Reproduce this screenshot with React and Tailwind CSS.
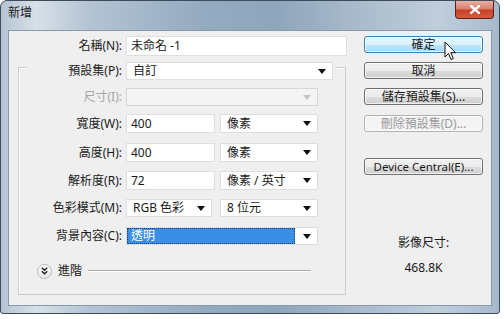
import React from 'react';

const font = { fontFamily: '"Noto Sans", "Noto Sans CJK TC", sans-serif' };

function Arrow({ disabled }) {
  return (
    <svg width="8" height="5" viewBox="0 0 8 5" className="shrink-0">
      <path d="M0 0 H8 L4 5 Z" fill={disabled ? '#c4c4c4' : '#111'} />
    </svg>
  );
}

function Field({ w, children }) {
  return (
    <div className={`flex items-center h-full border bg-white border-[#dedede] ${w}`}>
      <span className="flex-1 pl-[4px] leading-none text-[#1a1a1a]">{children}</span>
    </div>
  );
}

function Select({ w, children, disabled, selected }) {
  return (
    <div
      className={`flex items-center h-full border pr-[6px] ${disabled ? 'bg-[#f4f4f4] border-[#d6d6d6]' : 'bg-white border-[#dedede]'} ${w}`}
    >
      {selected ? (
        <span className="flex-1 h-[16px] mr-[8px] bg-[#3a8ee6] border border-dotted border-[#1c3f6a] text-white leading-[14px] pl-[3px]">
          {children}
        </span>
      ) : (
        <span className="flex-1 pl-[6px] leading-none text-[#1a1a1a]">{children}</span>
      )}
      <Arrow disabled={disabled} />
    </div>
  );
}

// label column inside the group box: inner left edge at x=19, fields start at x=126
function Label({ children, disabled }) {
  return (
    <div className={`w-[107px] shrink-0 pr-[4px] text-right leading-none ${disabled ? 'text-[#a8a8a8]' : 'text-[#1a1a1a]'}`}>
      {children}
    </div>
  );
}

function Btn({ children, variant }) {
  const styles = {
    default:
      'border-[#3c7fb1] bg-[linear-gradient(180deg,#eaf6fd_0%,#d9f0fc_50%,#bee6fd_51%,#a7d9f5_100%)] text-[#1a1a1a]',
    normal:
      'border-[#707070] bg-[linear-gradient(180deg,#f2f2f2_0%,#ebebeb_50%,#dddddd_51%,#cfcfcf_100%)] text-[#1a1a1a]',
    disabled: 'border-[#adb2b5] bg-[#f4f4f4] text-[#9a9a9a]',
  };
  return (
    <div
      className={`w-[119px] h-[17px] rounded-[3px] border flex items-center justify-center leading-none shadow-[inset_0_0_0_1px_rgba(255,255,255,0.7)] ${styles[variant]}`}
    >
      {children}
    </div>
  );
}

export default function App() {
  return (
    <div className="w-[504px] h-[319px] bg-white relative overflow-hidden text-[12px]" style={font}>
      <div className="w-[500px] h-[314px] rounded-t-[7px] rounded-b-[3px] border border-[#3e4b59] bg-[linear-gradient(90deg,#b4c3d2_0%,#d7e0e8_7%,#b3c3d3_18%,#95abc1_40%,#8ea5bc_55%,#aabbcc_72%,#c0cedb_88%,#a6b9cc_100%)] flex flex-col px-[7px] pb-[7px]">
        {/* title bar */}
        <div className="h-[29px] flex items-start justify-between">
          <span className="pt-[6px] text-[12px] leading-none text-[#1a1a1a]">新增</span>
          <div className="-mr-[2px] w-[39px] h-[18px] rounded-b-[4px] border border-t-0 border-[#5e2016] bg-[linear-gradient(180deg,#eab0a3_0%,#d9806d_45%,#c64128_55%,#d65b3f_100%)] flex items-center justify-center">
            <svg width="10" height="9" viewBox="0 0 10 9">
              <path d="M1 1 L9 8 M9 1 L1 8" stroke="#fff" strokeWidth="2.4" strokeLinecap="square" />
            </svg>
          </div>
        </div>

        {/* client */}
        <div className="flex-1 bg-[#efefef] border border-[#8799ad] flex">
          {/* left */}
          <div className="w-[347px] pt-[5px] flex flex-col">
            <div className="flex items-center h-[20px]">
              <div className="w-[117px] pr-[4px] text-right leading-none text-[#1a1a1a]">名稱(N):</div>
              <Field w="w-[221px]">未命名 -1</Field>
            </div>

            <div className="mt-[11px] ml-[9px] w-[328px] h-[228px] border border-[#cbcbcb] shadow-[inset_1px_1px_0_#fff] flex flex-col">
              {/* preset row sits on the border */}
              <div className="-mt-[6px] flex h-[18px]">
                <div className="w-[8px]" />
                <div className="w-[99px] bg-[#efefef] flex items-center justify-end pr-[4px] leading-none text-[#1a1a1a]">預設集(P):</div>
                <Select w="w-[207px]">自訂</Select>
                <div className="w-[2px] bg-[#efefef]" />
              </div>

              <div className="mt-[8px] flex items-center h-[18px]">
                <Label disabled>尺寸(I):</Label>
                <Select w="w-[192px]" disabled />
              </div>

              <div className="mt-[8px] flex items-center h-[19px] gap-[5px]">
                <Label>寬度(W):</Label>
                <Field w="w-[89px] -ml-[5px]">400</Field>
                <Select w="w-[98px]">像素</Select>
              </div>

              <div className="mt-[10px] flex items-center h-[19px] gap-[5px]">
                <Label>高度(H):</Label>
                <Field w="w-[89px] -ml-[5px]">400</Field>
                <Select w="w-[98px]">像素</Select>
              </div>

              <div className="mt-[9px] flex items-center h-[19px] gap-[5px]">
                <Label>解析度(R):</Label>
                <Field w="w-[89px] -ml-[5px]">72</Field>
                <Select w="w-[98px]">像素 / 英寸</Select>
              </div>

              <div className="mt-[9px] flex items-center h-[18px] gap-[8px]">
                <Label>色彩模式(M):</Label>
                <Select w="w-[86px] -ml-[8px]">RGB 色彩</Select>
                <Select w="w-[98px]">8 位元</Select>
              </div>

              <div className="mt-[10px] flex items-center h-[18px]">
                <Label>背景內容(C):</Label>
                <Select w="w-[192px]" selected>透明</Select>
              </div>

              <div className="mt-[18px] ml-[18px] flex items-center h-[16px]">
                <div className="w-[15px] h-[15px] rounded-full border border-[#b9b9b9] bg-[linear-gradient(180deg,#ffffff_0%,#e6e6e6_100%)] flex items-center justify-center">
                  <svg width="7" height="8" viewBox="0 0 7 8">
                    <path d="M0.8 0.8 L3.5 3.3 L6.2 0.8 M0.8 4.3 L3.5 6.8 L6.2 4.3" stroke="#222" strokeWidth="1.5" fill="none" />
                  </svg>
                </div>
                <span className="ml-[6px] leading-none text-[#1a1a1a]">進階</span>
                <div className="ml-[6px] w-[223px] h-[1px] bg-[#a8a8a8] border-b border-white box-content" />
              </div>
            </div>
          </div>

          {/* right */}
          <div className="ml-[8px] w-[119px] pt-[5px] flex flex-col items-center">
            <Btn variant="default">確定</Btn>
            <div className="mt-[9px]"><Btn variant="normal">取消</Btn></div>
            <div className="mt-[9px]"><Btn variant="normal">儲存預設集(S)...</Btn></div>
            <div className="mt-[10px]"><Btn variant="disabled">刪除預設集(D)...</Btn></div>
            <div className="mt-[26px]"><Btn variant="normal"><span className="text-[11.5px]">Device Central(E)...</span></Btn></div>
            <div className="mt-[62px] leading-none text-[#1a1a1a]">影像尺寸:</div>
            <div className="mt-[13px] leading-none text-[#1a1a1a]">468.8K</div>
          </div>
        </div>
      </div>

      {/* mouse pointer over the OK button */}
      <svg className="absolute left-[444px] top-[41px]" width="13" height="20" viewBox="0 0 13 20">
        <path d="M1 1 V16 L4.5 12.5 L7 18.5 L9.3 17.5 L6.8 11.7 H11.5 Z" fill="#fff" stroke="#111" strokeWidth="1" strokeLinejoin="round" />
      </svg>
    </div>
  );
}
